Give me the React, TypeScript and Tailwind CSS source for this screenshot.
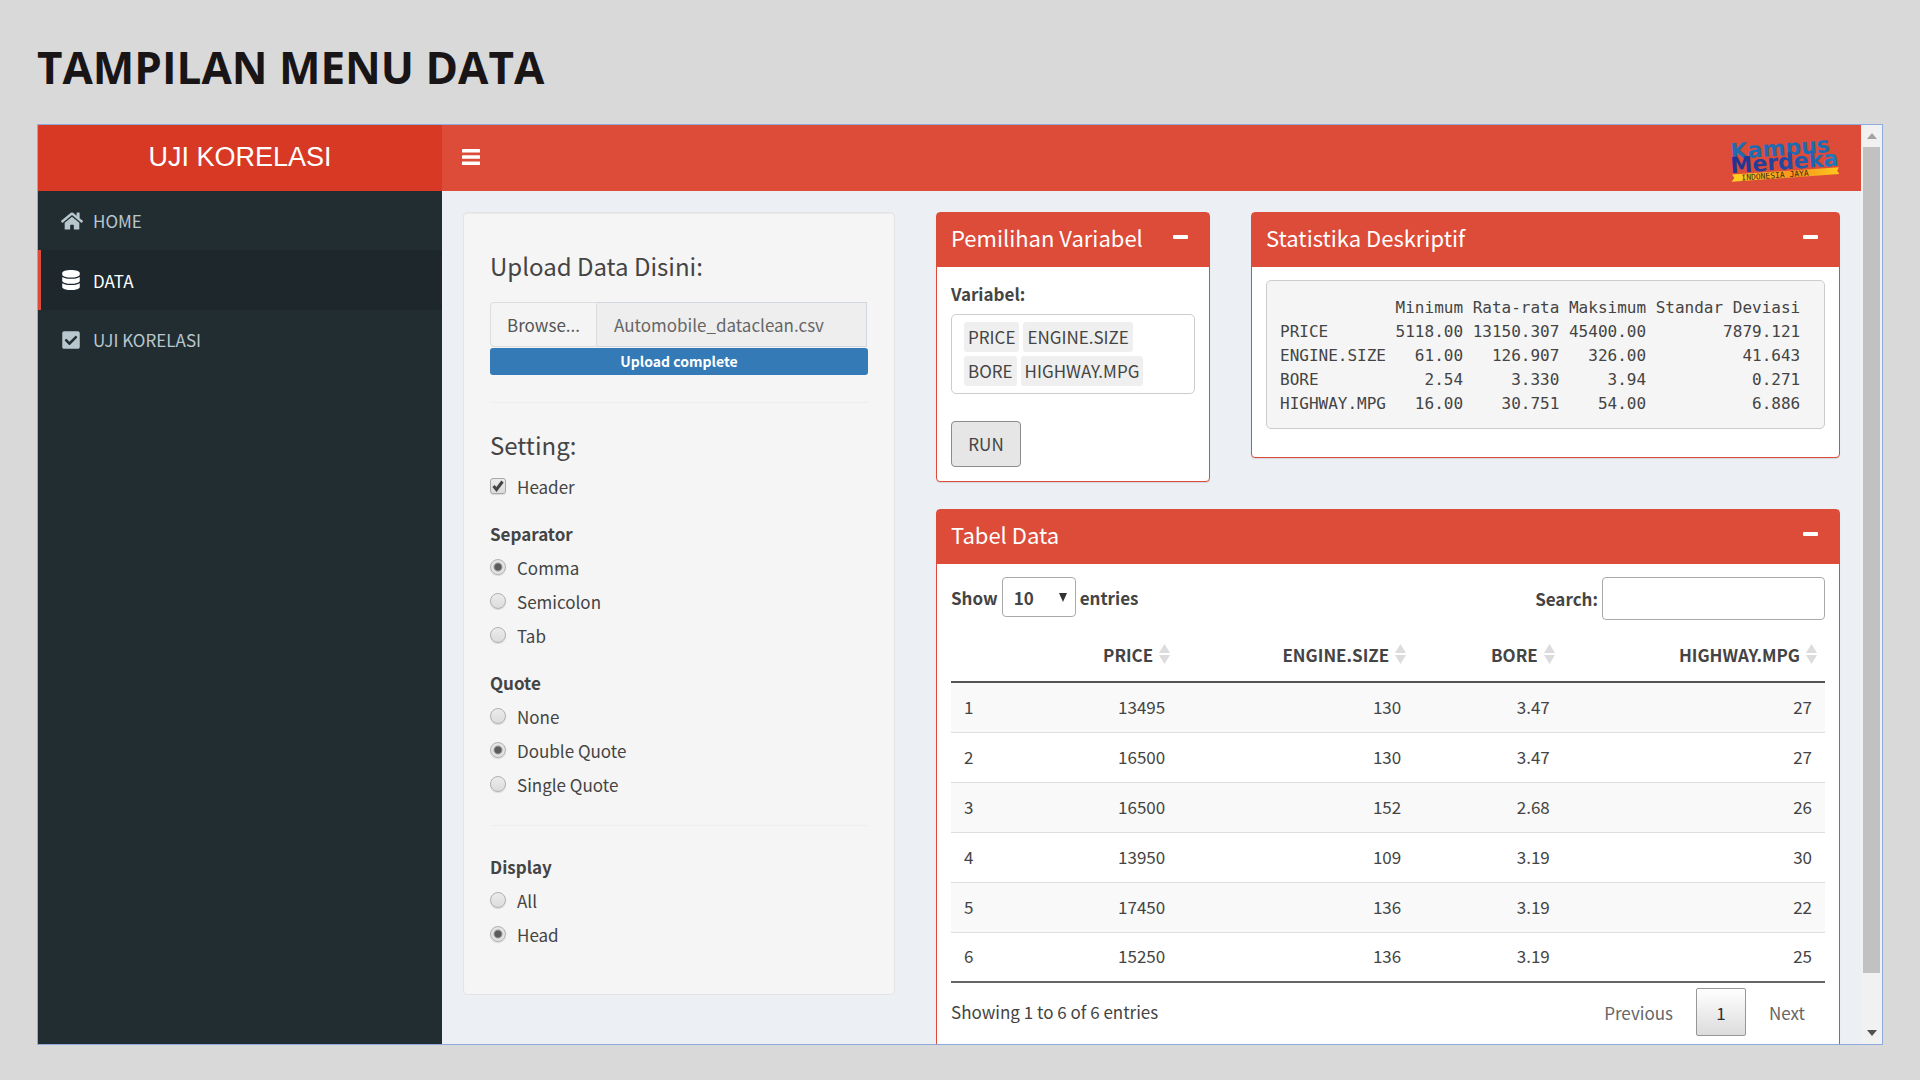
import { useState } from "react";
import type { ReactNode } from "react";
import { FaHome, FaDatabase, FaCheckSquare } from "react-icons/fa";

const stats = `            Minimum Rata-rata Maksimum Standar Deviasi
PRICE       5118.00 13150.307 45400.00        7879.121
ENGINE.SIZE   61.00   126.907   326.00          41.643
BORE           2.54     3.330     3.94           0.271
HIGHWAY.MPG   16.00    30.751    54.00           6.886`;

const columns = ["PRICE", "ENGINE.SIZE", "BORE", "HIGHWAY.MPG"];

const rows = [
  ["1", "13495", "130", "3.47", "27"],
  ["2", "16500", "130", "3.47", "27"],
  ["3", "16500", "152", "2.68", "26"],
  ["4", "13950", "109", "3.19", "30"],
  ["5", "17450", "136", "3.19", "22"],
  ["6", "15250", "136", "3.19", "25"],
];

const variables = ["PRICE", "ENGINE.SIZE", "BORE", "HIGHWAY.MPG"];

function KampusMerdekaLogo() {
  return (
    <svg viewBox="0 -6 112 60" className="h-[60px] w-28 shrink-0 overflow-visible" role="img" aria-label="Kampus Merdeka Indonesia Jaya">
      <defs>
        <linearGradient id="merdeka" x1="0" x2="1" y1="0" y2="0">
          <stop offset="0" stopColor="#23318f" />
          <stop offset="0.5" stopColor="#2747a0" />
          <stop offset="1" stopColor="#1c7fc4" />
        </linearGradient>
        <linearGradient id="ribbon" x1="0" x2="1" y1="0" y2="0">
          <stop offset="0" stopColor="#fdd321" />
          <stop offset="0.6" stopColor="#f7941d" />
          <stop offset="1" stopColor="#fdc91c" />
        </linearGradient>
      </defs>
      <g transform="rotate(-4 2 24)" fontFamily="DejaVu Sans">
        <text x="0" y="25" fontSize="22" fontWeight="700" fill="#1f6cb3">Kampus</text>
        <text x="-1" y="39" fontSize="22" fontWeight="700" fill="url(#merdeka)">Merdeka</text>
        <path d="M0 40.500h107l-2 3.500 2 3.500H-1l3-3.500z" fill="url(#ribbon)" />
        <text x="9" y="47" fontSize="8" fontFamily="DejaVu Sans Mono" wordSpacing="0" fill="#3a2a10">INDONESIA  JAYA</text>
      </g>
    </svg>
  );
}

function MenuItem({ icon, label, active = false }: { icon: ReactNode; label: string; active?: boolean }) {
  return (
    <li>
      <a
        href="#"
        aria-current={active ? "page" : undefined}
        className={
          active
            ? "flex h-[60px] items-center border-l-3 border-[#dd4b39] bg-[#1e282c] pl-5 text-white"
            : "flex h-[59px] items-center border-l-3 border-transparent pl-5 text-[#b8c7ce]"
        }
      >
        <span className="flex w-8 text-[20px]">{icon}</span>
        {label}
      </a>
    </li>
  );
}

function Box({ title, children }: { title: string; children: ReactNode }) {
  return (
    <section className="rounded-[4px] border border-[#dd4b39] bg-white shadow-[0_1px_1px_rgba(0,0,0,0.1)]">
      <header className="flex h-[54px] items-center justify-between bg-[#dd4b39] pr-[21px] pb-1.5 pl-3.5 text-white">
        <h3 className="text-[22px] leading-6">{title}</h3>
        <button type="button" aria-label={"Collapse " + title} className="flex h-6 items-center">
          <span className="block h-1 w-[15px] rounded-[1px] bg-white" />
        </button>
      </header>
      <div className="px-3.5 pt-[13px] pb-3.5">{children}</div>
    </section>
  );
}

function Radio({ name, label, checked = false }: { name: string; label: string; checked?: boolean }) {
  return (
    <label className="flex h-[34px] items-center gap-[11px]">
      <input
        type="radio"
        name={name}
        defaultChecked={checked}
        className="size-4 appearance-none rounded-full border border-[#b0b0b0] bg-linear-to-b from-[#ececec] to-[#dcdcdc] shadow-[0_1px_1px_rgba(0,0,0,0.12)] checked:bg-[radial-gradient(circle,#5c5c5c_0_3px,#e4e4e4_5px)]"
      />
      {label}
    </label>
  );
}

function RadioGroup({ title, name, options, selected }: { title: string; name: string; options: string[]; selected: string }) {
  return (
    <fieldset>
      <legend className="mb-[3px] h-[27px] font-bold">{title}</legend>
      {options.map((o) => (
        <Radio key={o} name={name} label={o} checked={o === selected} />
      ))}
    </fieldset>
  );
}

function SortIcon() {
  return (
    <svg viewBox="0 0 11 20" className="h-5 w-[11px]" fill="#dcdcdc" aria-hidden="true">
      <path d="M5.500 0 11 9H0z" />
      <path d="M5.500 20 0 11h11z" />
    </svg>
  );
}

export default function App() {
  const [size, setSize] = useState("10");
  return (
    <main className="flex h-screen flex-col bg-[#d9d9d9] px-[37px] pb-[35px]">
      <h1 className="flex h-[124px] shrink-0 items-center pt-[10px] font-['Open_Sans',sans-serif] text-[44px] font-bold text-[#191516]">
        TAMPILAN MENU DATA
      </h1>

      <div className="flex min-h-0 flex-1 overflow-hidden border border-[#8faadc] font-['Noto_Sans_CJK_SC',sans-serif] text-[17px] leading-[27px] text-[#444]">
        <aside className="flex w-[404px] shrink-0 flex-col bg-[#222d32]">
          <div className="flex h-[66px] shrink-0 items-center justify-center bg-[#d73925] pb-0.5 font-['Liberation_Sans',sans-serif] text-[27px] text-white">
            UJI KORELASI
          </div>
          <nav>
            <ul>
              <MenuItem icon={<FaHome className="text-[22px]" />} label="HOME" />
              <MenuItem icon={<FaDatabase />} label="DATA" active />
              <MenuItem icon={<FaCheckSquare />} label="UJI KORELASI" />
            </ul>
          </nav>
        </aside>

        <div className="flex min-w-0 flex-1 flex-col overflow-hidden bg-[#ecf0f5]">
          <header className="flex h-[66px] shrink-0 items-center justify-between bg-[#dd4b39] pr-[18px] pl-5">
            <button type="button" aria-label="Toggle navigation" className="flex h-6 items-center pb-0.5">
              <svg viewBox="0 0 18 16" className="h-4 w-[18px]" fill="#fff" aria-hidden="true">
                <rect width="18" height="3.500" rx="0.500" />
                <rect y="6.250" width="18" height="3.500" rx="0.500" />
                <rect y="12.500" width="18" height="3.500" rx="0.500" />
              </svg>
            </button>
            <KampusMerdekaLogo />
          </header>

          <div className="grid grid-cols-[minmax(0,432fr)_minmax(0,904fr)] items-start gap-x-[41px] px-[21px] pt-[21px]">
            <form className="rounded-[4px] border border-[#e3e3e3] bg-[#f5f5f5] px-[26px] pt-[37px] pb-[43px] shadow-[inset_0_1px_1px_rgba(0,0,0,0.05)]">
              <h2 className="text-[24px] leading-8">Upload Data Disini:</h2>
              <div className="mt-5 flex h-[45px]">
                <button type="button" className="w-[107px] rounded-l-[4px] border border-[#ddd] bg-[#f4f4f4] text-[#555]">
                  Browse...
                </button>
                <input
                  type="text"
                  readOnly
                  aria-label="File"
                  defaultValue="Automobile_dataclean.csv"
                  className="mr-px min-w-0 flex-1 border border-l-0 border-[#d2d6de] bg-[#eee] px-[17px] text-[#666]"
                />
              </div>
              <div className="mt-px h-[27px] rounded-[3px] bg-[#337ab7] text-center text-[14px] leading-[26px] font-bold text-white">
                Upload complete
              </div>
              <hr className="mt-[27px] border-[#eee]" />
              <h2 className="mt-[26px] text-[24px] leading-8">Setting:</h2>
              <label className="relative mt-2 flex h-[34px] items-center gap-[11px]">
                <input
                  type="checkbox"
                  defaultChecked
                  className="peer size-4 appearance-none rounded-[3px] border border-[#a8a8a8] bg-linear-to-b from-[#ececec] to-[#dcdcdc] shadow-[0_1px_1px_rgba(0,0,0,0.12)]"
                />
                <svg viewBox="0 0 16 16" className="pointer-events-none absolute left-0 hidden size-4 peer-checked:block" fill="none" stroke="#444" strokeWidth="3" aria-hidden="true">
                  <path d="M3.500 8 6.500 11.500 12.500 3.500" />
                </svg>
                Header
              </label>
              <div className="mt-[17px]">
                <RadioGroup title="Separator" name="sep" options={["Comma", "Semicolon", "Tab"]} selected="Comma" />
              </div>
              <div className="mt-[17px]">
                <RadioGroup title="Quote" name="quote" options={["None", "Double Quote", "Single Quote"]} selected="Double Quote" />
              </div>
              <hr className="mt-6 mb-[27px] border-[#eee]" />
              <RadioGroup title="Display" name="disp" options={["All", "Head"]} selected="Head" />
            </form>

            <div className="flex min-w-0 flex-col gap-[27px]">
              <div className="grid grid-cols-[minmax(0,274fr)_minmax(0,589fr)] items-start gap-x-[41px]">
                <Box title="Pemilihan Variabel">
                  <div id="var-label" className="font-bold">Variabel:</div>
                  <ul
                    aria-labelledby="var-label"
                    className="mt-[7px] flex h-20 flex-wrap content-start gap-x-1 gap-y-1 rounded-[5px] border border-[#ccc] px-3 pt-[7px]"
                  >
                    {variables.map((v) => (
                      <li key={v} className="h-[30px] rounded-[3px] bg-[#efefef] px-1 leading-[30px]">
                        {v}
                      </li>
                    ))}
                  </ul>
                  <button
                    type="button"
                    className="mt-[27px] h-[46px] w-[70px] rounded-[4px] border border-[#8c8c8c] bg-[#e6e6e6] pb-0.5"
                  >
                    RUN
                  </button>
                </Box>

                <Box title="Statistika Deskriptif">
                  <pre className="mb-3.5 h-[149px] overflow-hidden rounded-[5px] border border-[#ccc] bg-[#f5f5f5] px-[13px] py-[15px] font-['DejaVu_Sans_Mono',monospace] text-[16px] leading-6">
                    {stats}
                  </pre>
                </Box>
              </div>

              <Box title="Tabel Data">
                <div className="flex items-start justify-between font-bold">
                  <label className="flex h-10 items-center gap-1">
                    Show
                    <span className="relative flex items-center">
                      <select
                        value={size}
                        onChange={(e) => setSize(e.target.value)}
                        className="h-10 w-[74px] appearance-none rounded-[4px] border border-[#aaa] bg-white pl-[11px]"
                      >
                        <option>10</option>
                        <option>25</option>
                        <option>50</option>
                        <option>100</option>
                      </select>
                      <svg viewBox="0 0 8 9" className="pointer-events-none absolute right-[9px] h-[9px] w-2" fill="#333" aria-hidden="true">
                        <path d="M0 0h8L4 9z" />
                      </svg>
                    </span>
                    entries
                  </label>
                  <label className="flex h-[43px] items-center gap-1">
                    Search:
                    <input type="search" className="h-[43px] w-[223px] rounded-[4px] border border-[#aaa] bg-white px-2 font-normal" />
                  </label>
                </div>

                <table className="mt-[7px] w-full table-fixed border-collapse border-b-2 border-[#666]">
                  <colgroup>
                    <col className="w-[7%]" />
                    <col className="w-[19%]" />
                    <col className="w-[27%]" />
                    <col className="w-[17%]" />
                    <col className="w-[30%]" />
                  </colgroup>
                  <thead>
                    <tr className="h-[55px] border-b-2 border-[#555]">
                      <th aria-label="Row" />
                      {columns.map((c) => (
                        <th key={c} className="pr-2 font-bold">
                          <button type="button" className="flex w-full items-center justify-end gap-1.5">
                            {c}
                            <SortIcon />
                          </button>
                        </th>
                      ))}
                    </tr>
                  </thead>
                  <tbody>
                    {rows.map((r) => (
                      <tr key={r[0]} className="h-[50px] border-t border-[#ddd] odd:bg-[#f9f9f9] first:border-t-0">
                        {r.map((c, i) => (
                          <td key={i} className="px-[13px] pb-0.5 text-right first:text-left">
                            {c}
                          </td>
                        ))}
                      </tr>
                    ))}
                  </tbody>
                </table>

                <div className="flex items-start justify-between pt-[5px]">
                  <p className="pt-[10px]">Showing 1 to 6 of 6 entries</p>
                  <nav aria-label="Pagination" className="flex h-12 items-center text-[#666]">
                    <button type="button" className="px-[23px]">Previous</button>
                    <button type="button" className="h-12 w-[50px] rounded-[2px] border border-[#979797] bg-linear-to-b from-white to-[#dcdcdc] text-[#333]">
                      1
                    </button>
                    <button type="button" className="pr-5 pl-[23px]">Next</button>
                  </nav>
                </div>
              </Box>
            </div>
          </div>
        </div>

        <div className="flex w-[21px] shrink-0 flex-col items-center bg-[#f1f1f1]" aria-hidden="true">
          <div className="flex h-[22px] items-center">
            <svg viewBox="0 0 10 6" className="h-1.5 w-2.5" fill="#a3a3a3"><path d="M0 6 5 0l5 6z" /></svg>
          </div>
          <div className="w-[17px] flex-[17] bg-[#c1c1c1]" />
          <div className="flex-1" />
          <div className="flex h-[22px] items-center">
            <svg viewBox="0 0 10 6" className="h-1.5 w-2.5" fill="#505050"><path d="M0 0h10L5 6z" /></svg>
          </div>
        </div>
      </div>
    </main>
  );
}
